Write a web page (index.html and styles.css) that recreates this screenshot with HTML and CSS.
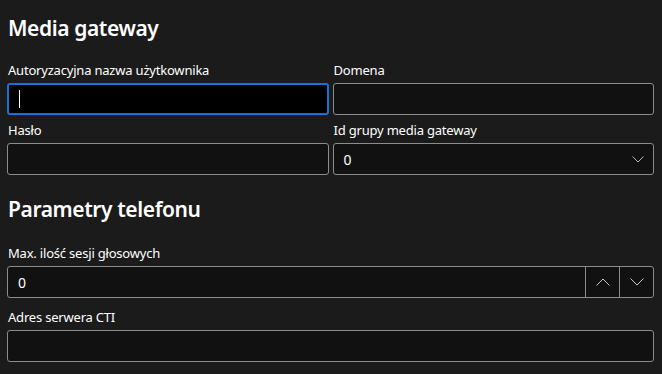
FILE: index.html
```html
<!DOCTYPE html>
<html lang="pl">
<head>
    <meta charset="UTF-8">
    <meta name="viewport" content="width=device-width, initial-scale=1.0">
    <title>Media gateway</title>
    <link rel="stylesheet" href="styles.css">
</head>
<body>
    <div class="settings">
        <h2 class="section-title first">Media gateway</h2>
        <div class="field-grid">
            <div class="field">
                <label for="authName">Autoryzacyjna nazwa użytkownika</label>
                <div class="text-box focused">
                    <span class="caret"></span>
                </div>
            </div>
            <div class="field">
                <label for="domain">Domena</label>
                <div class="text-box"></div>
            </div>
            <div class="field">
                <label for="password">Hasło</label>
                <div class="text-box"></div>
            </div>
            <div class="field">
                <label for="groupId">Id grupy media gateway</label>
                <div class="text-box combo">
                    <span class="value">0</span>
                    <svg class="chevron" width="12" height="7" viewBox="0 0 12 7">
                        <path d="M0.5 0.5 L6 6 L11.5 0.5" fill="none" stroke="#b8b8b8" stroke-width="1"/>
                    </svg>
                </div>
            </div>
        </div>

        <h2 class="section-title">Parametry telefonu</h2>
        <div class="field">
            <label for="sessions">Max. ilość sesji głosowych</label>
            <div class="text-box number">
                <span class="value">0</span>
                <button class="spin" type="button">
                    <svg width="14" height="8" viewBox="0 0 14 8">
                        <path d="M0.5 7.5 L7 1 L13.5 7.5" fill="none" stroke="#c8c8c8" stroke-width="1"/>
                    </svg>
                </button>
                <button class="spin" type="button">
                    <svg width="14" height="8" viewBox="0 0 14 8">
                        <path d="M0.5 0.5 L7 7 L13.5 0.5" fill="none" stroke="#c8c8c8" stroke-width="1"/>
                    </svg>
                </button>
            </div>
        </div>
        <div class="field spaced">
            <label for="cti">Adres serwera CTI</label>
            <div class="text-box"></div>
        </div>
    </div>
</body>
</html>
```

FILE: styles.css
```css
body {
    margin: 0;
    background: #1b1b1b;
    color: #ffffff;
    font-family: 'Noto Sans', 'Open Sans', sans-serif;
}

.settings {
    padding: 0 8px 0 7px;
}

/* Section headings */
.section-title {
    margin: 0;
    padding: 20px 0 0 1px;
    height: 63px;
    font-size: 21px;
    font-weight: 600;
    line-height: 28px;
    letter-spacing: -0.4px;
    box-sizing: border-box;
}

.section-title.first {
    padding-top: 14px;
    height: 55px;
}

.field-grid {
    display: grid;
    grid-template-columns: 1fr 1fr;
    column-gap: 4px;
}

.field label {
    display: block;
    padding: 6px 0 0 1px;
    height: 28px;
    box-sizing: border-box;
    font-size: 13px;
    line-height: 18px;
    letter-spacing: -0.2px;
    color: #ffffff;
}

.field.spaced label {
    height: 32px;
    padding-top: 10px;
}

/* Inputs */
.text-box {
    height: 32px;
    box-sizing: border-box;
    border: 1px solid #8c8c8c;
    border-radius: 3px;
    background: #111111;
    display: flex;
    align-items: center;
}

.text-box.focused {
    border: 2px solid #1473d6;
    background: #000000;
}

.caret {
    margin-left: 10px;
    width: 1px;
    height: 18px;
    background: #ffffff;
}

.value {
    flex: 1;
    padding-left: 10px;
    font-size: 14px;
}

.chevron {
    margin-right: 9px;
}

.number .spin {
    width: 34px;
    height: 100%;
    padding: 0;
    border: none;
    border-left: 1px solid #8c8c8c;
    background: transparent;
    display: flex;
    align-items: center;
    justify-content: center;
}
```
